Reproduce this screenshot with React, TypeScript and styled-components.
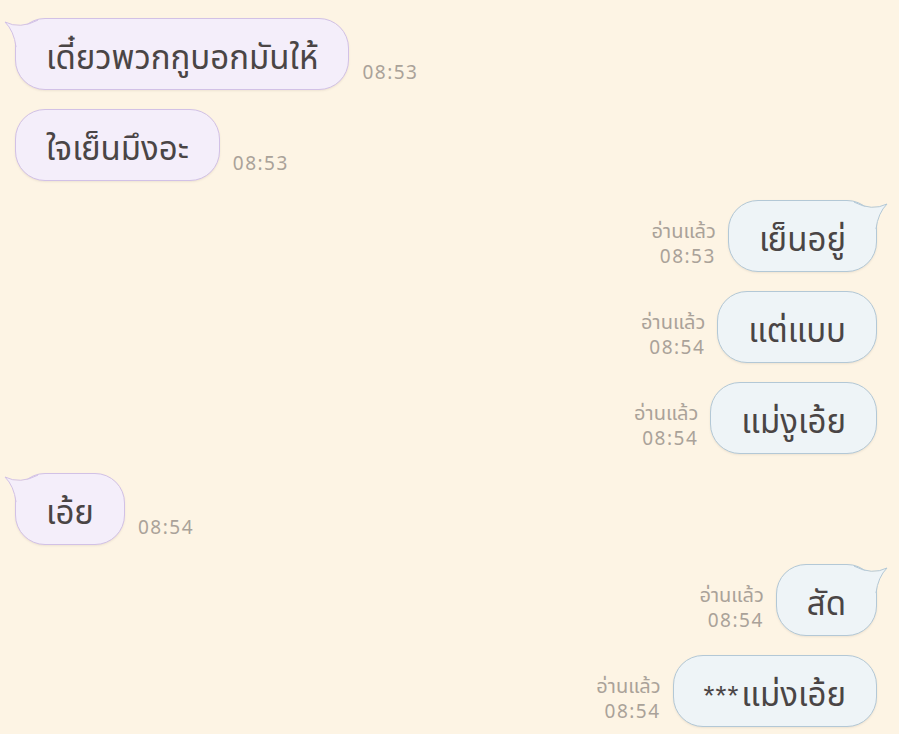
import React from "react";
import styled, { createGlobalStyle } from "styled-components";

const Global = createGlobalStyle`
  html, body { margin: 0; padding: 0; background: #fdf4e4; }
  body { font-family: "Noto Sans Thai", "Noto Sans", "DejaVu Sans", sans-serif; }
`;

const Page = styled.div`
  width: 899px;
  height: 734px;
  overflow: hidden;
  background: #fdf4e4;
  box-sizing: border-box;
  padding: 18px 22px 0 15px;
  display: flex;
  flex-direction: column;
  gap: 19px;
`;

const Row = styled.div<{ $mine?: boolean }>`
  display: flex;
  flex-direction: ${(p) => (p.$mine ? "row-reverse" : "row")};
  align-items: flex-end;
  gap: ${(p) => (p.$mine ? "12px" : "13px")};
`;

const Bubble = styled.div<{ $mine?: boolean }>`
  position: relative;
  height: 72px;
  box-sizing: border-box;
  padding: 10px 30px 0;
  border-radius: 30px;
  display: flex;
  align-items: center;
  font-size: 33px;
  color: #4a4545;
  white-space: nowrap;
  background: ${(p) => (p.$mine ? "#eef4f7" : "#f4eefa")};
  border: 1px solid ${(p) => (p.$mine ? "#b3c8d6" : "#d2c1e6")};
  box-shadow: 0 1px 2px rgba(120, 110, 90, 0.12);
`;

const Stars = styled.span`
  font-family: "Liberation Sans", sans-serif;
  font-size: 28px;
  letter-spacing: 1px;
  margin-right: 2px;
`;

const Tail = styled.svg<{ $mine?: boolean }>`
  position: absolute;
  top: -3px;
  width: 42px;
  height: 36px;
  overflow: visible;
  ${(p) => (p.$mine ? "right: -15px; transform: scaleX(-1);" : "left: -15px;")}
`;

const Stamp = styled.div`
  font-family: "Noto Sans", "Liberation Sans", sans-serif;
  font-size: 19px;
  letter-spacing: 1.5px;
  color: #aaa299;
  margin-bottom: 5px;
`;

const ReadInfo = styled.div`
  display: flex;
  flex-direction: column;
  align-items: flex-end;
  font-size: 20px;
  line-height: 24px;
  color: #aaa299;
  margin-bottom: 4px;
`;

const ReadTime = styled.span`
  font-family: "Noto Sans", "Liberation Sans", sans-serif;
  font-size: 19px;
  letter-spacing: 1.5px;
`;

function BubbleTail({ mine }: { mine?: boolean }) {
  const fill = mine ? "#eef4f7" : "#f4eefa";
  const stroke = mine ? "#b3c8d6" : "#d2c1e6";
  return (
    <Tail $mine={mine} viewBox="-15 -3 42 36">
      <path d="M22 1.6 Q4 11 -11 3 Q-2 12 0.5 28 L24 28 L24 1.6 Z" fill={fill} />
      <path d="M22 1.1 Q4 10.5 -11 3 Q-2 12 0 28" fill="none" stroke={stroke} strokeWidth="1" />
    </Tail>
  );
}

type Msg = { text: string; time: string; mine?: boolean; tail?: boolean; stars?: boolean };

const messages: Msg[] = [
  { text: "เดี๋ยวพวกกูบอกมันให้", time: "08:53", tail: true },
  { text: "ใจเย็นมึงอะ", time: "08:53" },
  { text: "เย็นอยู่", time: "08:53", mine: true, tail: true },
  { text: "แต่แบบ", time: "08:54", mine: true },
  { text: "แม่งูเอ้ย", time: "08:54", mine: true },
  { text: "เอ้ย", time: "08:54", tail: true },
  { text: "สัด", time: "08:54", mine: true, tail: true },
  { text: "แม่งเอ้ย", time: "08:54", mine: true, stars: true },
];

export default function App() {
  return (
    <>
      <Global />
      <Page>
        {messages.map((m, i) => (
          <Row key={i} $mine={m.mine}>
            <Bubble $mine={m.mine}>
              {m.tail && <BubbleTail mine={m.mine} />}
              {m.stars && <Stars>***</Stars>}
              {m.text}
            </Bubble>
            {m.mine ? (
              <ReadInfo>
                <span>อ่านแล้ว</span>
                <ReadTime>{m.time}</ReadTime>
              </ReadInfo>
            ) : (
              <Stamp>{m.time}</Stamp>
            )}
          </Row>
        ))}
      </Page>
    </>
  );
}
